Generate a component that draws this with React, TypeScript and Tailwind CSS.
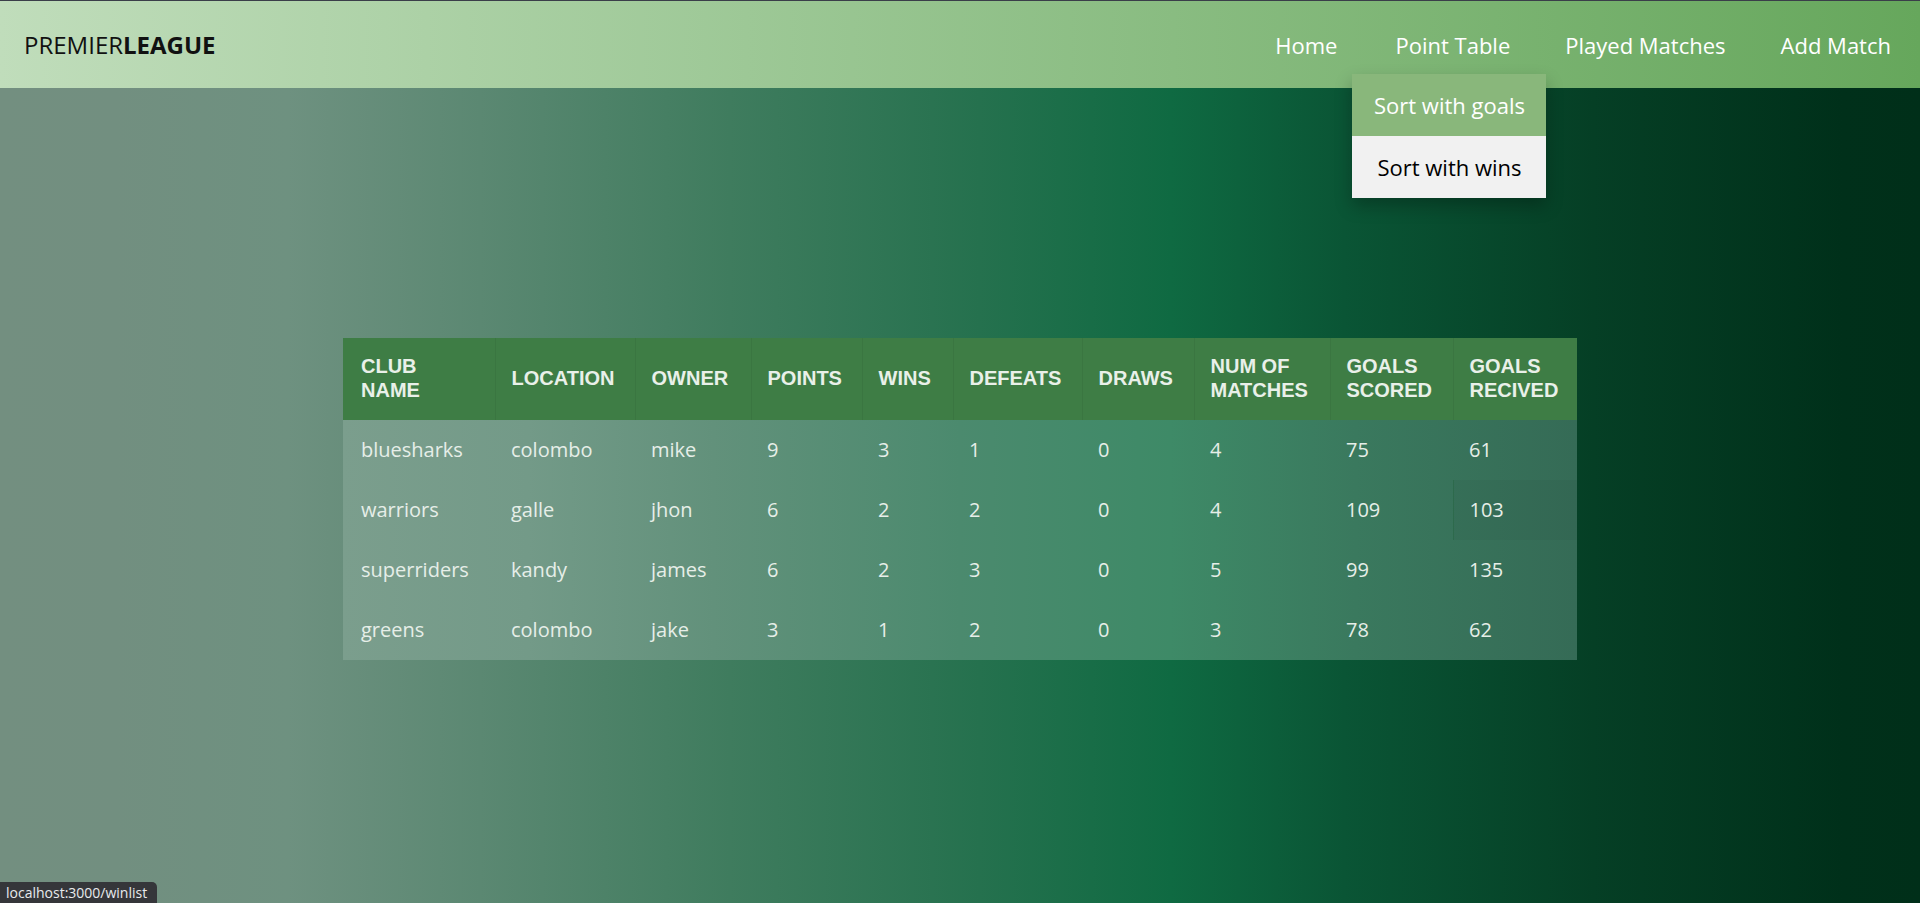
import React from 'react';

type Club = {
    name: string;
    location: string;
    owner: string;
    points: number;
    wins: number;
    defeats: number;
    draws: number;
    matches: number;
    scored: number;
    recived: number;
};

const clubs: Club[] = [
    { name: 'bluesharks', location: 'colombo', owner: 'mike', points: 9, wins: 3, defeats: 1, draws: 0, matches: 4, scored: 75, recived: 61 },
    { name: 'warriors', location: 'galle', owner: 'jhon', points: 6, wins: 2, defeats: 2, draws: 0, matches: 4, scored: 109, recived: 103 },
    { name: 'superriders', location: 'kandy', owner: 'james', points: 6, wins: 2, defeats: 3, draws: 0, matches: 5, scored: 99, recived: 135 },
    { name: 'greens', location: 'colombo', owner: 'jake', points: 3, wins: 1, defeats: 2, draws: 0, matches: 3, scored: 78, recived: 62 },
];

const thClass =
    'text-left align-middle font-bold uppercase text-[20px] leading-[24px] text-[#e9f0e9] pl-4 pr-2 pt-[16px] pb-[18px] border-l border-black/5';
const tdClass = 'pl-4 h-[60px] text-[20px] text-[#e6eee8]';

export default function App() {
    return (
        <div className="relative min-h-screen w-full bg-[linear-gradient(to_right,#738f80_0%,#728f80_6%,#6e9180_15%,#5b8872_25%,#3f7c5e_38%,#25714e_51%,#0f6a42_61%,#0a5535_70%,#053f25_83%,#00301a_96%,#002f19_100%)] font-['Open_Sans',sans-serif]">
            <div className="h-px bg-[#3a3e49]" />
            <header className="relative flex items-center justify-between h-[87px] bg-[linear-gradient(to_right,#c0ddbb,#66a75c)] pl-6 pr-7">
                <div className="text-[24px] text-[#111] pt-px">
                    PREMIER<span className="font-bold">LEAGUE</span>
                </div>
                <nav className="flex items-center gap-[55px] text-[22px] text-white mr-[1px] pt-[2px]">
                    <a href="#" className="mr-[3px]">Home</a>
                    <div className="relative">
                        <a href="#">Point Table</a>
                        <div className="absolute top-[45px] left-[-43px] w-[194px] shadow-[0_8px_16px_0_rgba(0,0,0,0.25)] z-10">
                            <a href="#" className="flex items-center justify-center h-[62px] bg-[#89b77b] text-white">
                                Sort with goals
                            </a>
                            <a href="#" className="flex items-center justify-center h-[62px] bg-[#f1f1f1] text-black">
                                Sort with wins
                            </a>
                        </div>
                    </div>
                    <a href="#">Played Matches</a>
                    <a href="#">Add Match</a>
                </nav>
            </header>

            <div className="flex justify-center pt-[250px]">
                <table className="table-fixed w-[1234px] border-collapse bg-[linear-gradient(to_right,#7b9e8d_0%,#739a88_15%,#62917b_30%,#4b8a6e_50%,#3e8a67_67%,#3a795e_82%,#356b56_100%)]">
                    <colgroup>
                        <col className="w-[152px]" />
                        <col className="w-[140px]" />
                        <col className="w-[116px]" />
                        <col className="w-[111px]" />
                        <col className="w-[91px]" />
                        <col className="w-[129px]" />
                        <col className="w-[112px]" />
                        <col className="w-[136px]" />
                        <col className="w-[123px]" />
                        <col className="w-[124px]" />
                    </colgroup>
                    <thead className="bg-[#3e7d45] font-['Liberation_Sans',Arial,sans-serif]">
                        <tr>
                            <th className={thClass + ' pl-[18px] border-l-0'}>
                                Club
                                <br />
                                Name
                            </th>
                            <th className={thClass}>Location</th>
                            <th className={thClass}>Owner</th>
                            <th className={thClass}>Points</th>
                            <th className={thClass}>Wins</th>
                            <th className={thClass}>Defeats</th>
                            <th className={thClass}>Draws</th>
                            <th className={thClass}>
                                Num of
                                <br />
                                Matches
                            </th>
                            <th className={thClass}>
                                Goals
                                <br />
                                Scored
                            </th>
                            <th className={thClass}>
                                Goals
                                <br />
                                Recived
                            </th>
                        </tr>
                    </thead>
                    <tbody>
                        {clubs.map((club, index) => (
                            <tr key={index}>
                                <td className={tdClass + ' pl-[18px]'}>{club.name}</td>
                                <td className={tdClass}>{club.location}</td>
                                <td className={tdClass}>{club.owner}</td>
                                <td className={tdClass}>{club.points}</td>
                                <td className={tdClass}>{club.wins}</td>
                                <td className={tdClass}>{club.defeats}</td>
                                <td className={tdClass}>{club.draws}</td>
                                <td className={tdClass}>{club.matches}</td>
                                <td className={tdClass}>{club.scored}</td>
                                <td
                                    className={
                                        index === 1
                                            ? tdClass + ' border-l border-[#2d6a4c] bg-black/[0.03]'
                                            : tdClass
                                    }
                                >
                                    {club.recived}
                                </td>
                            </tr>
                        ))}
                    </tbody>
                </table>
            </div>

            <div className="absolute bottom-0 left-0 h-[21px] w-[157px] rounded-tr-[5px] bg-[#35363a] pl-[6px] text-[14px] leading-[21px] text-[#e8eaed] font-['Open_Sans',sans-serif]">
                localhost:3000/winlist
            </div>
        </div>
    );
}
